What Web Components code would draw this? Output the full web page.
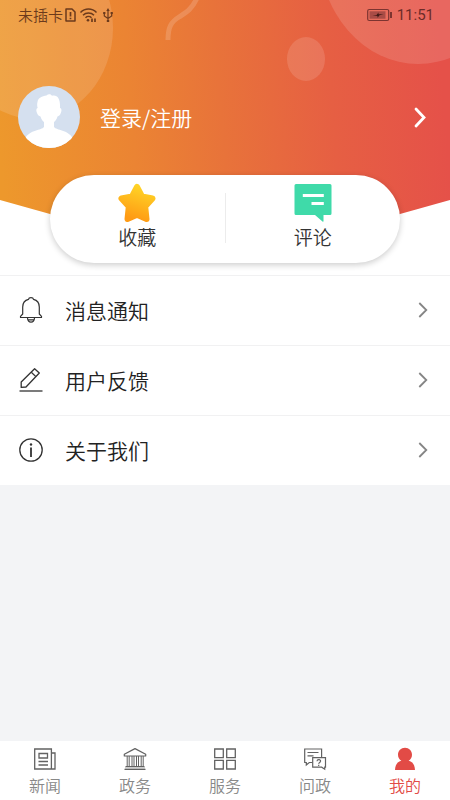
<!DOCTYPE html>
<html lang="zh-CN">
<head>
<meta charset="utf-8">
<meta name="viewport" content="width=device-width, initial-scale=1">
<title>我的</title>
<style>
body { margin: 0; font-family: "Noto Sans CJK SC", sans-serif; font-weight: 350; color: #222; background: #f3f4f6; }
</style>
</head>
<body>
<profile-page></profile-page>

<script>
const icons = {
  bell: `<svg width="26" height="28" viewBox="0 0 26 28" fill="none" stroke="#333" stroke-width="1.2"><path d="M2.500 21.500h21v-1.200l-2.200-2.300v-7c0-4-2.300-6.700-5.800-7.600C15.300 2 14.400 1.600 13 1.600s-2.300.4-2.500 1.800C7 4.300 4.700 7 4.700 11v7l-2.200 2.300z" stroke-linejoin="round"/><path d="M9.500 22c.4 5.500 6.600 5.500 7 0M9.500 23.800h7"/></svg>`,
  pencil: `<svg width="26" height="28" viewBox="0 0 26 28" fill="none" stroke="#333" stroke-width="1.300" stroke-linejoin="round"><path d="M1.500 25h23"/><path d="M16.600 2.700l4.700 4.300L8 21l-4.800.4V16z"/><path d="M13.300 6.200l4.600 4.400"/></svg>`,
  info: `<svg width="26" height="28" viewBox="0 0 26 28" fill="none" stroke="#333" stroke-width="1.300"><circle cx="13" cy="14" r="11.200"/><path d="M13 11.500v9.500" stroke-width="1.800"/><circle cx="13" cy="8.500" r="1.200" fill="#333" stroke="none"/></svg>`,
  star: `<svg width="40" height="40" viewBox="0 0 40 40"><defs><linearGradient id="g" x1=".7" y1="0" x2=".4" y2="1"><stop stop-color="#ffd326"/><stop offset="1" stop-color="#ff9b14"/></linearGradient></defs><path d="M20 4l5 9.500 10.500 2-7.300 8 1.300 12.500L20 31.800 10.500 36l1.300-12.500-7.300-8 10.500-2z" fill="url(#g)" stroke="url(#g)" stroke-width="6" stroke-linejoin="round"/></svg>`,
  comment: `<svg width="40" height="40" viewBox="0 0 40 40"><path d="M3 1h34q1.500 0 1.500 1.500v28q0 1.500-1.500 1.500h-6.500v6q0 1.200-1 .4L22 32H3q-1.500 0-1.500-1.500v-28Q1.500 1 3 1z" fill="#3fdaa9"/><path d="M9.800 12.500h21M18.500 20.500h12.300" stroke="#fff" stroke-width="2.800"/></svg>`,
  news: `<svg width="24" height="24" viewBox="0 0 24 24" fill="none" stroke="#626262" stroke-width="1.300"><path d="M1.700 2h16.700v20H1.700zM18.400 6H22v16h-4"/><path d="M6 6.500h8.500V11H6zM5.500 14.500h9.500M5.500 18h9.500"/></svg>`,
  gov: `<svg width="24" height="24" viewBox="0 0 24 24" fill="none" stroke="#626262" stroke-width="1.200"><path d="M1.300 9V7.300L12 1.600l10.700 5.700V9z" stroke-linejoin="round"/><path d="M4.200 9v10.500M6.200 9v10.500M9 9v10.500M11 9v10.500M13.500 9v10.500M15.500 9v10.500M18.200 9v10.500M20.200 9v10.500" stroke-width="1"/><path d="M2.500 19.500h19M1.500 22.400h21"/><path d="M2 21h20" stroke="#aaa"/></svg>`,
  grid: `<svg width="24" height="24" viewBox="0 0 24 24" fill="none" stroke="#626262" stroke-width="1.300"><path d="M1.700 2h8.600v8.600H1.700zM13.700 2h8.600v8.600h-8.600zM1.700 13.400h8.600V22H1.700zM13.700 13.400h8.600V22h-8.600z"/></svg>`,
  ask: `<svg width="24" height="24" viewBox="0 0 24 24" fill="none" stroke="#626262" stroke-width="1.200"><path d="M18.600 10V2H1.700v13.500h1.600V18l3-2.500h3"/><path d="M4.500 5.500h11M4.500 8.800h6"/><path d="M9.700 10.700h12.800v9.500h-.8v2l-3-2h-9z"/><path d="M14 14.200c.2-2.200 4-1.900 3.500.2-.3 1.100-1.800 1-1.800 2.400M15.700 17.800v1.200"/></svg>`,
  me: `<svg width="24" height="24" viewBox="0 0 24 24" fill="#e24b46"><path d="M12 .8c4 0 7 3 7 7 0 2.800-1.300 4.700-3.400 6 4.200.8 6.200 4.200 6.400 9.200H2c.2-5 2.200-8.400 6.400-9.200C6.300 12.500 5 10.600 5 7.800c0-4 3-7 7-7z"/></svg>`,
  chevron: `<svg width="12" height="18" viewBox="0 0 12 18" fill="none" stroke="#858585" stroke-width="1.800"><path d="M2.300 2l7 7-7 7"/></svg>`
};

function define(name, build) {
  customElements.define(name, class extends HTMLElement {
    connectedCallback() {
      if (!this.shadowRoot) this.attachShadow({ mode: "open" }).innerHTML = build(this);
    }
  });
}

define("status-bar", () => `
<style>
:host { display: flex; justify-content: space-between; align-items: center; height: 30px; padding: 0 16px 0 18px; font-size: 15px; line-height: 30px; color: #6b3a1c; }
div { display: flex; align-items: center; gap: 2px; }
.right { color: #6b2b28; gap: 5px; font-family: Roboto, sans-serif; font-weight: 400; }
</style>
<div><span>未插卡</span>
<svg width="36" height="16" viewBox="0 0 36 16" fill="none" stroke="#6b3a1c" stroke-width="1.500">
<path d="M1 2h6l3 3v9H1z" stroke-linejoin="round"/><path d="M5.500 5v4.500M5.500 10.800v1.500" stroke-width="1.700"/>
<path d="M15.500 5.500c4.500-4.600 11.500-4.600 16 0M18 8.200c3-3 8-3 11 0M20.500 10.800c1.700-1.700 4.300-1.700 6 0" stroke-width="1.500"/><circle cx="23" cy="13.200" r="1.300" fill="#6b3a1c" stroke="none"/><path d="M27 15v-3.500M30 11.500V15" stroke-width="1.700"/></svg>
<svg width="10" height="16" viewBox="0 0 10 16" fill="none" stroke="#6b3a1c" stroke-width="1.200"><path d="M5 3v11M1.300 6v3L5 11.500 8.700 9V6"/><path d="M3.300 4L5 1l1.700 3zM.2 5h2.200v2H.2zM7.600 5h2.200v2H7.600zM3.800 13h2.400v2H3.800z" fill="#6b3a1c" stroke="none"/></svg></div>
<div class="right"><svg width="25" height="14" viewBox="0 0 25 14"><rect x=".7" y="1.500" width="21" height="11" rx="1.500" fill="none" stroke="#7c3430" stroke-width="1.200"/><rect x="2.500" y="3.300" width="16" height="7.400" fill="#a94c46"/><path d="M5.500 7h4l2-2.500v1.700h5l-4 1-2 2.500V8z" fill="#401815"/><path d="M24 4v6" stroke="#6b2b28" stroke-width="1.700"/></svg><span>11:51</span></div>`);

define("user-login", () => `
<style>
:host { display: block; }
a { display: flex; align-items: center; height: 62px; padding: 0 22px 0 18px; color: #fff; text-decoration: none; font-size: 21px; line-height: 32px; }
span { flex: 1; margin-left: 20px; }
</style>
<a href="#login"><svg width="62" height="62" viewBox="0 0 62 62"><defs><clipPath id="c"><circle cx="31" cy="31" r="31"/></clipPath></defs><circle cx="31" cy="31" r="31" fill="#d5e0ef"/><path clip-path="url(#c)" fill="#fff" d="M19.500 16c.5-4 4.500-6 9-6.500 3-2 4.500-1 5.500.3 5.500-1.300 8.500 3 8 12.200 1.800.7 1.800 2.500.8 5-.8 2.300-2 3-3.300 3.500-.8 3-2.300 4.500-3.500 5.500v5c2.500 3.500 14 2.500 19 11.500V64H7V52.500C12 43.500 23.500 44.500 26 41v-5c-1.200-1-2.700-2.500-3.500-5.500-1.500-.5-2.700-1.200-3.500-3.500-1-2.500-1-4.300.7-5-.7-2-.7-4-.2-6z"/></svg>
<span>登录/注册</span>
<svg width="16" height="24" viewBox="0 0 16 24" fill="none" stroke="#fff" stroke-width="2.800" stroke-linecap="round"><path d="M4 4l8 8.500L4 21"/></svg></a>`);

define("quick-action", el => `
<style>
:host { display: block; flex: 1; }
button { display: flex; flex-direction: column; align-items: center; width: 100%; padding: 0 0 2px; border: 0; background: none; font: inherit; font-size: 19px; line-height: 28px; color: #333; }
svg { display: block; }
</style>
<button type="button">${icons[el.getAttribute("icon")]}<slot></slot></button>`);

define("profile-header", () => `
<style>
:host { display: block; position: relative; background: #fff; padding-bottom: 12px; }
.art { position: absolute; inset: 0; width: 100%; height: 100%; }
.content { position: relative; display: flex; flex-direction: column; }
user-login { margin-top: 56px; }
.card { display: flex; align-items: center; box-sizing: border-box; height: 88px; margin: 27px 50px 0; padding: 0 0 2px; border-radius: 44px; background: #fff; box-shadow: 0 2px 6px #0003; }
.rule { width: 1px; height: 50px; background: #ececec; }
</style>
<svg class="art" viewBox="0 0 450 275" preserveAspectRatio="none" aria-hidden="true">
<defs><linearGradient id="bg" gradientUnits="userSpaceOnUse" x1="0" y1="150" x2="445" y2="115"><stop stop-color="#ed982c"/><stop offset=".3" stop-color="#eb8433"/><stop offset=".5" stop-color="#e8733a"/><stop offset=".75" stop-color="#e65f43"/><stop offset="1" stop-color="#e55149"/></linearGradient>
<clipPath id="k"><path d="M0 0h450v200l-50 14Q225 262 50 214L0 200z"/></clipPath></defs>
<g clip-path="url(#k)"><path d="M0 0h450v275H0z" fill="url(#bg)"/>
<g fill="#fff" fill-opacity=".13"><ellipse cx="34" cy="28" rx="79" ry="91"/><ellipse cx="418" cy="-50" rx="99" ry="114"/><ellipse cx="306" cy="59" rx="19" ry="22"/></g>
<path d="M168 40c0-13 3-18 11-23s13-8 18-19" fill="none" stroke="#fff" stroke-opacity=".16" stroke-width="5"/></g></svg>
<div class="content"><status-bar></status-bar><user-login></user-login>
<div class="card"><quick-action icon="star">收藏</quick-action><div class="rule"></div><quick-action icon="comment">评论</quick-action></div></div>`);

define("menu-item", el => `
<style>
:host { display: block; border-top: 1px solid #f1f1f2; background: #fff; }
a { display: flex; align-items: center; box-sizing: border-box; height: 69px; padding: 0 21px 2px 18px; color: inherit; text-decoration: none; font-size: 21px; line-height: 32px; }
span { flex: 1; margin-left: 21px; }
</style>
<a href="#${el.getAttribute("icon")}">${icons[el.getAttribute("icon")]}<span><slot></slot></span>${icons.chevron}</a>`);

define("tab-item", el => `
<style>
:host { display: block; flex: 1; }
a { display: flex; flex-direction: column; align-items: center; gap: 2px; color: #888; text-decoration: none; font-size: 16px; line-height: 24px; }
:host([active]) a { color: #e24b46; }
</style>
<a href="#${el.getAttribute("icon")}">${icons[el.getAttribute("icon")]}<slot></slot></a>`);

define("tab-bar", () => `
<style>
:host { display: block; }
nav { display: flex; box-sizing: border-box; padding: 6px 0 3px; background: #fff; }
</style>
<nav><slot></slot></nav>`);

define("profile-page", () => `
<style>
:host { display: flex; flex-direction: column; min-height: 100vh; }
main { flex: 1; }
</style>
<main><profile-header></profile-header>
<menu-item icon="bell">消息通知</menu-item>
<menu-item icon="pencil">用户反馈</menu-item>
<menu-item icon="info">关于我们</menu-item></main>
<tab-bar><tab-item icon="news">新闻</tab-item><tab-item icon="gov">政务</tab-item><tab-item icon="grid">服务</tab-item><tab-item icon="ask">问政</tab-item><tab-item icon="me" active>我的</tab-item></tab-bar>`);
</script>
</body>
</html>
